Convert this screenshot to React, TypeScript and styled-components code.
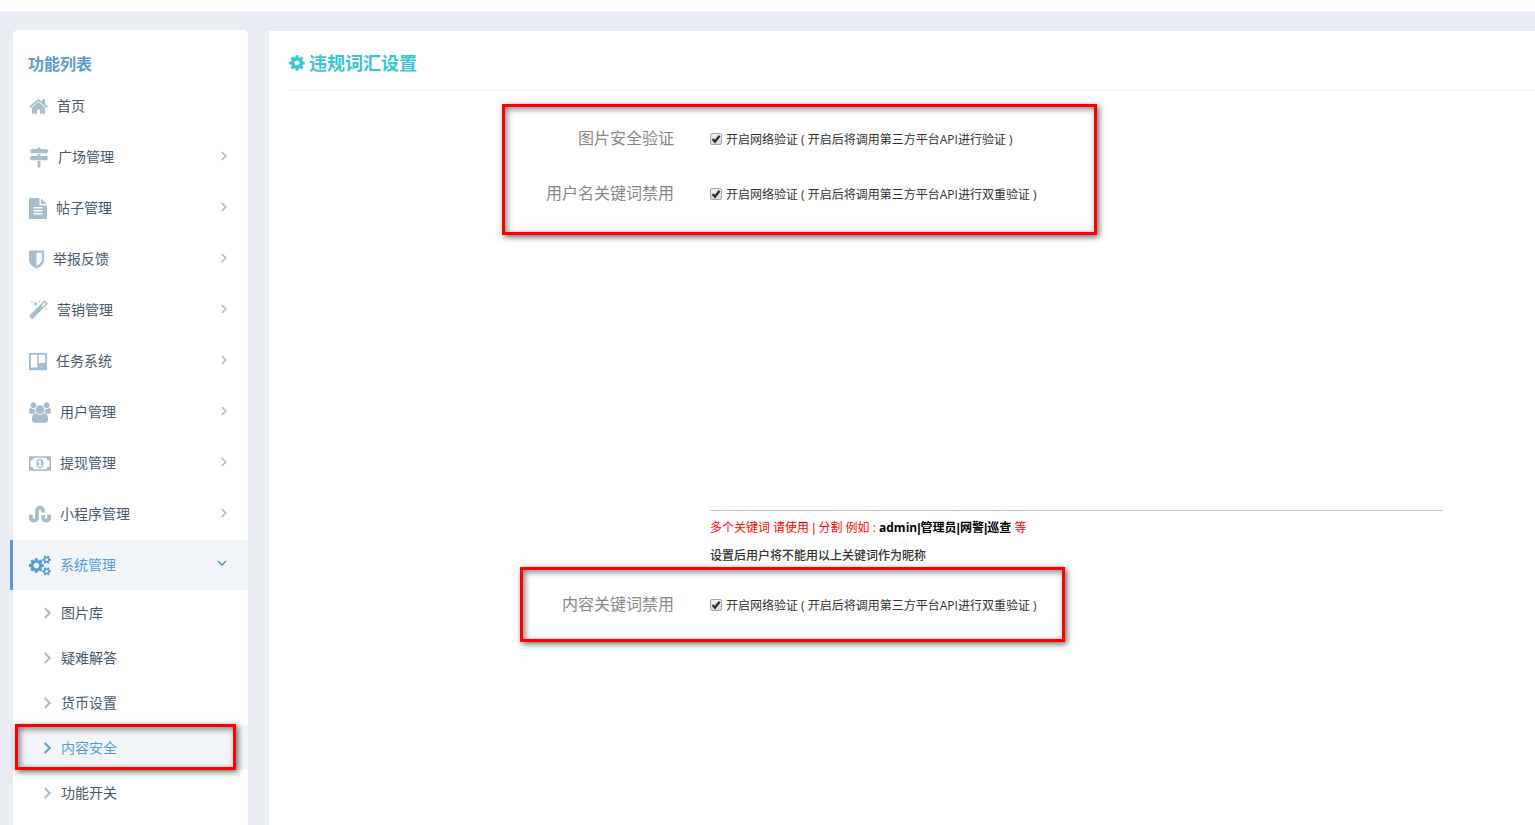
import React from "react";
import styled, { createGlobalStyle, css } from "styled-components";

const GlobalStyle = createGlobalStyle`
  * { box-sizing: border-box; }
  html, body, #root { height: 100%; }
  body {
    margin: 0;
    overflow: hidden;
    background: #e9ecf3;
    color: #333;
    font: 12px/20px "Open Sans", "Noto Sans CJK SC", sans-serif;
  }
`;

const Page = styled.div`
  display: flex;
  flex-direction: column;
  height: 100vh;
`;

const TopBar = styled.header`
  flex: none;
  height: 11px;
  background: #fff;
`;

const Columns = styled.div`
  flex: 1;
  min-height: 0;
  display: flex;
  align-items: stretch;
  gap: 21px;
  padding: 19px 0 0 13px;
`;

const Sidebar = styled.nav`
  flex: none;
  width: 235px;
  padding-top: 18px;
  background: #fff;
  border-radius: 5px 5px 0 0;
`;

const SidebarTitle = styled.h2`
  margin: 0 0 1px;
  padding: 0 15px;
  color: #5b9bd1;
  font-size: 16px;
  line-height: 32px;
  font-weight: 700;
`;

const Menu = styled.ul`
  margin: 0;
  padding: 0;
  list-style: none;
`;

const MenuItem = styled.li`
  position: relative;
  margin-bottom: 1px;
  &:last-child { margin-bottom: 0; }
`;

const MenuLink = styled.a<{ $active?: boolean }>`
  display: flex;
  align-items: center;
  gap: 9px;
  height: 50px;
  padding: 0 21px 0 16px;
  color: #485a6a;
  font-size: 14px;
  text-decoration: none;
  > svg { fill: #a7bdcd; }
  ${(p) =>
    p.$active &&
    css`
      margin-left: -3px;
      border-left: 3px solid #5b9bd1;
      background: #f2f6f9;
      color: #5b9bd1;
      > svg { fill: #5b9bd1; }
    `}
`;

const SubItem = styled.li`
  position: relative;
`;

const SubLink = styled.a<{ $active?: boolean }>`
  display: flex;
  align-items: center;
  gap: 9px;
  height: 45px;
  padding-left: 30px;
  font-size: 14px;
  text-decoration: none;
  color: ${(p) => (p.$active ? "#5b9bd1" : "#485a6a")};
  background: ${(p) => (p.$active ? "#f2f6f9" : "transparent")};
  > svg { stroke: ${(p) => (p.$active ? "#5b9bd1" : "#a7bdcd")}; }
`;

const Stroke = styled.svg`
  flex: none;
  && { fill: none; }
`;

const Arrow = styled(Stroke)<{ $open?: boolean }>`
  margin-left: auto;
  margin-bottom: 2px;
  stroke: ${(p) => (p.$open ? "#5b9bd1" : "#a7bdcd")};
`;

const Glyph = styled.svg`
  flex: none;
  display: block;
`;

const Panel = styled.main`
  flex: 1;
  min-width: 0;
  margin-top: 1px;
  padding-left: 20px;
  background: #fff;
`;

const PanelHead = styled.div`
  display: flex;
  align-items: center;
  gap: 4px;
  height: 60px;
  padding-top: 4px;
  margin-bottom: 20px;
  border-bottom: 1px solid #eef1f5;
  fill: #36c6d3;
`;

const PanelTitle = styled.h1`
  margin: 0;
  color: #36c6d3;
  font-size: 18px;
  line-height: 24px;
  font-weight: 700;
`;

const Group = styled.div`
  position: relative;
`;

const FormRow = styled.div`
  display: grid;
  grid-template-columns: 385fr 733fr 56fr;
  column-gap: 36px;
`;

const RowLabel = styled.span`
  color: #888;
  font-size: 16px;
  line-height: 54px;
  text-align: right;
`;

const Check = styled.label`
  display: flex;
  align-items: center;
  gap: 4px;
  height: 55px;
  white-space: nowrap;
`;

const CheckText = styled.span`
  padding-top: 2px;
`;

const Tick = styled.span`
  position: relative;
  width: 12px;
  height: 12px;
  svg {
    position: absolute;
    inset: 0;
    pointer-events: none;
  }
`;

const TickInput = styled.input`
  appearance: none;
  display: block;
  width: 12px;
  height: 12px;
  margin: 0;
  border: 1px solid #a5a5a5;
  border-radius: 2px;
  background: linear-gradient(#f0f0f0, #dcdcdc);
  & + svg { visibility: hidden; }
  &:checked + svg { visibility: visible; }
`;

const Field = styled.div`
  grid-column: 2;
`;

const Words = styled.textarea`
  display: block;
  width: 100%;
  height: 290px;
  padding: 0;
  border: 0;
  border-bottom: 1px solid #c2cad8;
  outline: 0;
  resize: none;
  background: transparent;
  font: inherit;
`;

const Hints = styled.div`
  padding: 3px 0 7px;
`;

const Hint = styled.p<{ $red?: boolean }>`
  margin: 0;
  line-height: 28px;
  color: ${(p) => (p.$red ? "#f00" : "#333")};
  font-weight: ${(p) => (p.$red ? 400 : 500)};
  b { color: #000; }
`;

const Pipe = styled.span`
  font-family: "Liberation Sans", sans-serif;
`;

const Marker = styled.div<{ $box: string }>`
  position: absolute;
  inset: ${(p) => p.$box};
  border: 3px solid #f00;
  box-shadow: 2px 2px 6px rgba(0, 0, 0, 0.6), inset 2px 2px 6px rgba(0, 0, 0, 0.5);
  pointer-events: none;
`;

type Icon = { x: number; w: number; px: number; d: string };

const GEAR: Icon = {
  x: 128, w: 1536, px: 16,
  d: "M1152 896q0-106-75-181t-181-75-181 75-75 181 75 181 181 75 181-75 75-181zm512-109v222q0 12-8 23t-20 13l-185 28q-19 54-39 91 35 50 107 138 10 12 10 25t-9 23q-27 37-99 108t-94 71q-12 0-26-9l-138-108q-44 23-91 38-16 136-29 186-7 28-36 28h-222q-14 0-24.5-8.5t-11.5-21.5l-28-184q-49-16-90-37l-141 107q-10 9-25 9-14 0-25-11-126-114-165-168-7-10-7-23 0-12 8-23 15-21 51-66.5t54-70.5q-27-50-41-99l-183-27q-13-2-21-12.5t-8-23.5v-222q0-12 8-23t19-13l186-28q14-46 39-92-40-57-107-138-10-12-10-24 0-10 9-23 26-36 98.5-107.5t94.5-71.5q13 0 26 10l138 107q44-23 91-38 16-136 29-186 7-28 36-28h222q14 0 24.5 8.5t11.5 21.5l28 184q49 16 90 37l142-107q9-9 24-9 13 0 25 10 129 119 165 170 7 8 7 22 0 12-8 23-15 21-51 66.5t-54 70.5q26 50 41 98l183 28q13 2 21 12.5t8 23.5z",
};

const SMALL_COG =
  "v140q0 16-149 31-12 27-30 52 51 113 51 138 0 4-4 7-122 71-124 71-8 0-46-47t-52-68q-20 2-30 2t-30-2q-14 21-52 68t-46 47q-2 0-124-71-4-3-4-7 0-25 51-138-18-25-30-52-149-15-149-31v-140q0-16 149-31 13-29 30-52-51-113-51-138 0-4 4-7 4-2 35-20t59-34 30-16q8 0 46 46.5t52 67.5q20-2 30-2t30 2q51-71 92-112l6-2q4 0 124 70 4 3 4 7 0 25-51 138 17 23 30 52 149 15 149 31z";

const MENU: { label: string; icon: Icon; leaf?: boolean }[] = [
  {
    label: "首页",
    leaf: true,
    icon: { x: 64, w: 1664, px: 19, d: "M1472 992v480q0 26-19 45t-45 19h-384v-384h-256v384h-384q-26 0-45-19t-19-45v-480q0-1 .5-3t.5-3l575-474 575 474q1 2 1 6zm223-69l-62 74q-8 9-21 11h-3q-13 0-21-7l-692-577-692 577q-12 8-24 7-13-2-21-11l-62-74q-8-10-7-23.5t11-21.5l719-599q32-26 76-26t76 26l244 204v-195q0-14 9-23t23-9h192q14 0 23 9t9 23v408l219 182q10 8 11 21.5t-7 23.5z" },
  },
  {
    label: "广场管理",
    icon: { x: 0, w: 1792, px: 20, d: "M1745 297q10 10 10 23t-10 23l-141 141q-28 28-68 28h-1344q-26 0-45-19t-19-45v-256q0-26 19-45t45-19h576v-64q0-26 19-45t45-19h128q26 0 45 19t19 45v64h512q40 0 68 28zm-977 919h256v512q0 26-19 45t-45 19h-128q-26 0-45-19t-19-45v-512zm832-448q26 0 45 19t19 45v256q0 26-19 45t-45 19h-1344q-40 0-68-28l-141-141q-10-10-10-23t10-23l141-141q28-28 68-28h512v-192h256v192h576z" },
  },
  {
    label: "帖子管理",
    icon: { x: 128, w: 1536, px: 18, d: "M1596 476q14 14 28 36h-472v-472q22 14 36 28zm-476 164h544v1056q0 40-28 68t-68 28h-1344q-40 0-68-28t-28-68v-1600q0-40 28-68t68-28h800v544q0 40 28 68t68 28zm160 736v-64q0-14-9-23t-23-9h-704q-14 0-23 9t-9 23v64q0 14 9 23t23 9h704q14 0 23-9t9-23zm0-256v-64q0-14-9-23t-23-9h-704q-14 0-23 9t-9 23v64q0 14 9 23t23 9h704q14 0 23-9t9-23zm0-256v-64q0-14-9-23t-23-9h-704q-14 0-23 9t-9 23v64q0 14 9 23t23 9h704q14 0 23-9t9-23z" },
  },
  {
    label: "举报反馈",
    icon: { x: 256, w: 1280, px: 15, d: "M1344 960v-640h-448v1137q119-63 213-137 235-184 235-360zm192-768v768q0 86-33.5 170.5t-83 150-118 127.5-126.5 103-121 77.5-89.5 49.5-42.5 20q-12 6-26 6t-26-6q-16-7-42.5-20t-89.5-49.5-121-77.5-126.5-103-118-127.5-83-150-33.5-170.5v-768q0-26 19-45t45-19h1152q26 0 45 19t19 45z" },
  },
  {
    label: "营销管理",
    icon: { x: 64, w: 1664, px: 19, d: "M1254 581l293-293-107-107-293 293zm447-293q0 27-18 45l-1286 1286q-18 18-45 18t-45-18l-198-198q-18-18-18-45t18-45l1286-1286q18-18 45-18t45 18l198 198q18 18 18 45zm-1351-190l98 30-98 30-30 98-30-98-98-30 98-30 30-98zm350 162l196 60-196 60-60 196-60-196-196-60 196-60 60-196zm930 478l98 30-98 30-30 98-30-98-98-30 98-30 30-98zm-640-640l98 30-98 30-30 98-30-98-98-30 98-30 30-98z" },
  },
  {
    label: "任务系统",
    icon: { x: 128, w: 1536, px: 18, d: "M832 1376v-1024q0-14-9-23t-23-9h-480q-14 0-23 9t-9 23v1024q0 14 9 23t23 9h480q14 0 23-9t9-23zm672-384v-640q0-14-9-23t-23-9h-480q-14 0-23 9t-9 23v640q0 14 9 23t23 9h480q14 0 23-9t9-23zm160-768v1344q0 26-19 45t-45 19h-1408q-26 0-45-19t-19-45v-1344q0-26 19-45t45-19h1408q26 0 45 19t19 45z" },
  },
  {
    label: "用户管理",
    icon: { x: 0, w: 1920, px: 22, d: "M593 896q-162 5-265 128h-134q-82 0-138-40.5t-56-118.5q0-353 124-353 6 0 43.5 21t97.5 42.5 119 21.5q67 0 133-23-5 37-5 66 0 139 81 256zm1071 637q0 120-73 189.5t-194 69.5h-874q-121 0-194-69.5t-73-189.5q0-53 3.5-103.5t14-109 26.5-108.5 43-97.5 62-81 85.5-53.5 111.5-20q10 0 43 21.5t73 48 107 48 135 21.5 135-21.5 107-48 73-48 43-21.5q61 0 111.5 20t85.5 53.5 62 81 43 97.5 26.5 108.5 14 109 3.5 103.5zm-1024-1277q0 106-75 181t-181 75-181-75-75-181 75-181 181-75 181 75 75 181zm704 384q0 159-112.5 271.5t-271.5 112.5-271.5-112.5-112.5-271.5 112.5-271.5 271.5-112.5 271.5 112.5 112.5 271.5zm576 225q0 78-56 118.5t-138 40.5h-134q-103-123-265-128 81-117 81-256 0-29-5-66 66 23 133 23 59 0 119-21.5t97.5-42.5 43.5-21q124 0 124 353zm-128-609q0 106-75 181t-181 75-181-75-75-181 75-181 181-75 181 75 75 181z" },
  },
  {
    label: "提现管理",
    icon: { x: 0, w: 1920, px: 22, d: "M768 1152h384v-96h-128v-448h-114l-148 137 77 80q42-37 55-57h2v288h-128v96zm512-256q0 70-21 142t-59.5 134-101.5 101-138 39-138-39-101.5-101-59.5-134-21-142 21-142 59.5-134 101.5-101 138-39 138 39 101.5 101 59.5 134 21 142zm512 256v-512q-106 0-181-75t-75-181h-1152q0 106-75 181t-181 75v512q106 0 181 75t75 181h1152q0-106 75-181t181-75zm128-832v1152q0 26-19 45t-45 19h-1792q-26 0-45-19t-19-45v-1152q0-26 19-45t45-19h1792q26 0 45 19t19 45z" },
  },
  {
    label: "小程序管理",
    icon: { x: 0, w: 1920, px: 22, d: "M1062 686v-118q0-42-30-72t-72-30-72 30-30 72v612q0 175-126 299t-303 124q-178 0-303.5-125.5t-125.5-303.5v-266h328v262q0 43 30 72.5t72 29.5 72-29.5 30-72.5v-620q0-171 126.5-292t301.5-121q176 0 302 122t126 294v136l-195 58zm530 222h328v266q0 178-125.5 303.5t-303.5 125.5q-177 0-303-124.5t-126-300.5v-268l131 61 195-58v270q0 42 30 71.5t72 29.5 72-29.5 30-71.5v-275z" },
  },
];

const SYSTEM: Icon = {
  x: 0, w: 1920, px: 22,
  d: "M896 896q0-106-75-181t-181-75-181 75-75 181 75 181 181 75 181-75 75-181zm768 512q0-52-38-90t-90-38-90 38-38 90q0 53 37.5 90.5t90.5 37.5 90.5-37.5 37.5-90.5zm0-1024q0-52-38-90t-90-38-90 38-38 90q0 53 37.5 90.5t90.5 37.5 90.5-37.5 37.5-90.5zm-384 421v185q0 10-7 19.5t-16 10.5l-155 24q-11 35-32 76 34 48 90 115 7 11 7 20 0 12-7 19-23 30-82.5 89.5t-78.5 59.5q-11 0-21-7l-115-90q-37 19-77 31-11 108-23 155-7 24-30 24h-186q-11 0-20-7.5t-10-17.5l-23-153q-34-10-75-31l-118 89q-7 7-20 7-11 0-21-8-144-133-144-160 0-9 7-19 10-14 41-53t47-61q-23-44-35-82l-152-24q-10-1-17-9.5t-7-19.5v-185q0-10 7-19.5t16-10.5l155-24q11-35 32-76-34-48-90-115-7-11-7-20 0-12 7-20 22-30 82-89t79-59q11 0 21 7l115 90q34-18 77-32 11-108 23-154 7-24 30-24h186q11 0 20 7.5t10 17.5l23 153q34 10 75 31l118-89q8-7 20-7 11 0 21 8 144 133 144 160 0 8-7 19-12 16-42 54t-45 60q23 48 34 82l152 23q10 2 17 10.5t7 19.5zm640 533" + SMALL_COG + "m0-1024" + SMALL_COG,
};

const SUBMENU = ["图片库", "疑难解答", "货币设置", "内容安全", "功能开关"];

function FaIcon({ icon, height = 21 }: { icon: Icon; height?: number }) {
  return (
    <Glyph width={icon.px} height={height} viewBox={`${icon.x} 0 ${icon.w} 1792`} aria-hidden="true">
      <path d={icon.d} />
    </Glyph>
  );
}

function CheckOption({ children }: { children: React.ReactNode }) {
  return (
    <Check>
      <Tick>
        <TickInput type="checkbox" defaultChecked />
        <svg width="12" height="12" viewBox="0 0 12 12" aria-hidden="true">
          <path d="M2.6 6.2L5 8.6L9.6 2.8" fill="none" stroke="#333" strokeWidth="2.4" />
        </svg>
      </Tick>
      <CheckText>{children}</CheckText>
    </Check>
  );
}

export default function App() {
  return (
    <Page>
      <GlobalStyle />
      <TopBar />
      <Columns>
        <Sidebar>
          <SidebarTitle>功能列表</SidebarTitle>
          <Menu>
            {MENU.map((item) => (
              <MenuItem key={item.label}>
                <MenuLink href="#">
                  <FaIcon icon={item.icon} />
                  {item.label}
                  {!item.leaf && (
                    <Arrow width="6" height="10" viewBox="0 0 6 10" strokeWidth="1.6">
                      <path d="M.8 1l4 4-4 4" />
                    </Arrow>
                  )}
                </MenuLink>
              </MenuItem>
            ))}
            <MenuItem>
              <MenuLink href="#" $active>
                <FaIcon icon={SYSTEM} />
                系统管理
                <Arrow $open width="10" height="10" viewBox="0 0 10 10" strokeWidth="1.6">
                  <path d="M1 2l4 4 4-4" />
                </Arrow>
              </MenuLink>
              <Menu>
                {SUBMENU.map((label) => {
                  const active = label === "内容安全";
                  return (
                    <SubItem key={label}>
                      <SubLink href="#" $active={active}>
                        <Stroke width="9" height="12" viewBox="0 0 9 12" strokeWidth="1.9">
                          <path d="M1.7 1l5 5-5 5" />
                        </Stroke>
                        {label}
                      </SubLink>
                      {active && <Marker $box="-1px 12px 0 2px" />}
                    </SubItem>
                  );
                })}
              </Menu>
            </MenuItem>
          </Menu>
        </Sidebar>

        <Panel>
          <PanelHead>
            <FaIcon icon={GEAR} height={18} />
            <PanelTitle>违规词汇设置</PanelTitle>
          </PanelHead>

          <Group>
            <FormRow>
              <RowLabel>图片安全验证</RowLabel>
              <CheckOption>开启网络验证 ( 开启后将调用第三方平台API进行验证 )</CheckOption>
            </FormRow>
            <FormRow>
              <RowLabel>用户名关键词禁用</RowLabel>
              <CheckOption>开启网络验证 ( 开启后将调用第三方平台API进行双重验证 )</CheckOption>
            </FormRow>
            <Marker $box="-7px 438px -14px 213px" />
          </Group>

          <FormRow>
            <Field>
              <Words aria-label="用户名关键词禁用" />
              <Hints>
                <Hint $red>
                  多个关键词 请使用 <Pipe>|</Pipe> 分割 例如 :{" "}
                  <b>
                    admin<Pipe>|</Pipe>管理员<Pipe>|</Pipe>网警<Pipe>|</Pipe>巡查
                  </b>{" "}
                  等
                </Hint>
                <Hint>设置后用户将不能用以上关键词作为昵称</Hint>
              </Hints>
            </Field>
          </FormRow>

          <Group>
            <FormRow>
              <RowLabel>内容关键词禁用</RowLabel>
              <CheckOption>开启网络验证 ( 开启后将调用第三方平台API进行双重验证 )</CheckOption>
            </FormRow>
            <Marker $box="-10px 470px -10px 231px" />
          </Group>
        </Panel>
      </Columns>
    </Page>
  );
}
